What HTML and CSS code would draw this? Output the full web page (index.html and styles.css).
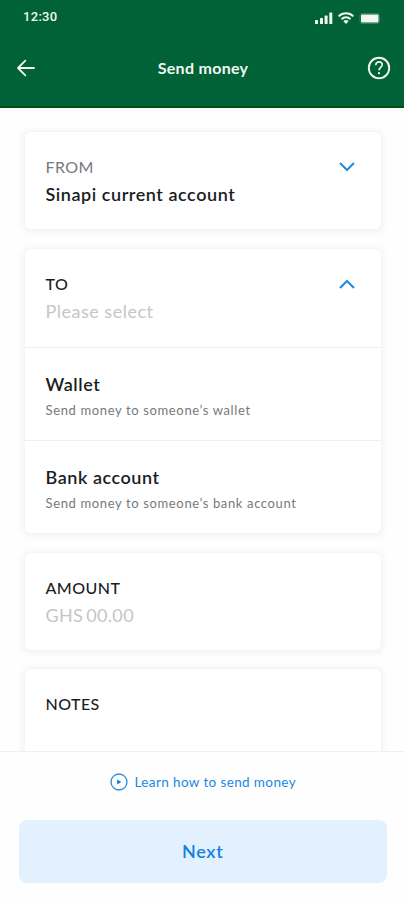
FILE: index.html
```html
<!DOCTYPE html>
<html lang="en">
<head>
<meta charset="utf-8">
<title>Send money</title>
<link rel="stylesheet" href="styles.css">
</head>
<body>
<div class="screen">
  <header class="header">
    <div class="status">
      <span class="time">12:30</span>
      <svg class="status-icons" width="70" height="16" viewBox="0 0 70 16" fill="#f1f8f3">
        <rect x="1" y="11" width="3" height="4" rx=".6"/><rect x="6" y="9" width="3" height="6" rx=".6"/><rect x="10.600" y="6.500" width="3" height="8.500" rx=".6"/><rect x="15.300" y="3.500" width="3" height="11.500" rx=".6"/>
        <g fill="none" stroke="#f1f8f3" stroke-width="2"><path d="M24.700 7.400a10.300 10.300 0 0 1 14.600 0"/><path d="M27.500 10.200a6.400 6.400 0 0 1 9 0"/></g>
        <path d="M29.400 12.300a3.700 3.700 0 0 1 5.200 0L32 15z"/>
        <rect x="46" y="4.500" width="19.500" height="10" rx="2" fill="none" stroke="#397f58"/><rect x="47" y="5.500" width="17.500" height="8" rx=".8"/><path d="M67 8v3q1.300-1.500 0-3z" fill="#397f58"/>
      </svg>
    </div>
    <div class="bar">
      <svg class="back" width="20" height="20" viewBox="0 0 20 20" fill="none" stroke="#f1f8f3" stroke-width="1.800" stroke-linecap="round" stroke-linejoin="round"><path d="M18 10H2M9.300 2.700 2 10l7.300 7.300"/></svg>
      <h1 class="title">Send money</h1>
      <svg class="help" width="24" height="24" viewBox="0 0 24 24" fill="none" stroke="#f1f8f3" stroke-width="1.900"><circle cx="12" cy="12" r="10.200"/><path d="M8.800 9.200c0-4.500 6.800-4.200 6.400-.2-.3 2.200-3.200 2.600-3.200 5.300" stroke-width="1.700"/><circle cx="12" cy="17.200" r="1.100" fill="#f1f8f3" stroke="none"/></svg>
    </div>
  </header>

  <main class="content">
    <section class="card field">
      <div class="row"><span class="label muted">FROM</span>
        <svg class="chevron" width="18" height="12" viewBox="0 0 18 12"><path d="m2 2 7 7 7-7"/></svg></div>
      <div class="value">Sinapi current account</div>
    </section>
    <section class="card">
      <div class="field select">
        <div class="row"><span class="label">TO</span>
          <svg class="chevron" width="18" height="12" viewBox="0 0 18 12"><path d="m2 10 7-7 7 7"/></svg></div>
        <div class="placeholder">Please select</div>
      </div>
      <div class="option">
        <div class="value">Wallet</div>
        <div class="hint">Send money to someone’s wallet</div>
      </div>
      <div class="option">
        <div class="value">Bank account</div>
        <div class="hint">Send money to someone’s bank account</div>
      </div>
    </section>
    <section class="card field">
      <div class="row"><span class="label">AMOUNT</span></div>
      <div class="placeholder currency">GHS 00.00</div>
    </section>
    <section class="card field">
      <div class="row"><span class="label">NOTES</span></div>
    </section>
  </main>

  <footer class="footer">
    <a class="learn">
      <svg width="18" height="18" viewBox="0 0 18 18"><circle cx="9" cy="9" r="8" fill="none" stroke="#2a8ce0" stroke-width="1.300"/><path d="M7.200 6.600v4.800L11.300 9z" fill="#0b78d8"/></svg>
      <span class="learn-text">Learn how to send money</span>
    </a>
    <button class="next">Next</button>
  </footer>
</div>
</body>
</html>
```
FILE: styles.css
```css
* { box-sizing: border-box; }
body { margin: 0; background: #fefefe; font-family: Lato, "Liberation Sans", sans-serif; color: #1b1d1f; }
.screen { height: 900px; display: flex; flex-direction: column; overflow: hidden; }
.header { flex: none; height: 108px; background: #006236; border-bottom: 2px solid #005012; color: #f1f8f3; }
.status { height: 34px; padding: 0 20px 0 23px; display: flex; justify-content: space-between; align-items: center; }
.time { font: 500 13px/34px Roboto, sans-serif; letter-spacing: .3px; }
.status-icons { margin-bottom: 1px; }
.bar { height: 68px; display: flex; align-items: center; justify-content: space-between; padding: 0 13px 0 16px; }
.title { margin: 0; padding-left: 3px; font-size: 16px; line-height: 20px; font-weight: 700; letter-spacing: .3px; }
.content { flex: 1; min-height: 0; overflow: hidden; padding: 24px 23px 0 25px; display: flex; flex-direction: column; gap: 19.5px; }
.card { flex: none; background: #fff; border-radius: 6px; box-shadow: 0 0 0 1px #f5f5f5, 0 1px 7px 2px rgba(0,0,0,.055); }
.field { height: 97px; padding: 25px 25.5px 0 20.5px; }
.select { height: 98.5px; }
.row { height: 20px; display: flex; justify-content: space-between; align-items: center; }
.label { font-size: 16px; line-height: 20px; letter-spacing: .45px; font-weight: 500; }
.muted { color: #77797b; font-weight: 400; }
.chevron { fill: none; stroke: #2088e5; stroke-width: 2; }
.value { margin-top: 4px; font-size: 18px; line-height: 26px; font-weight: 600; letter-spacing: .55px; }
.placeholder { margin-top: 5px; font-size: 18px; line-height: 24px; letter-spacing: .5px; color: #c4c6c8; }
.currency { letter-spacing: .35px; word-spacing: -2px; }
.option { height: 93px; border-top: 1px solid #eeeff0; padding: 23px 20.5px 0; }
.option .value { margin: 0; }
.hint { font-size: 13px; line-height: 18px; margin-top: 4px; letter-spacing: .64px; color: #77797b; }
.footer { flex: none; height: 149px; border-top: 1px solid #f0f0f0; background: #fefefe; padding: 20px 17px 0 18.5px; }
.learn { height: 20px; display: flex; justify-content: center; align-items: center; gap: 7px; color: #2088e5; font-size: 13.5px; letter-spacing: .38px; }
.next { display: block; width: 100%; height: 63px; margin-top: 28px; padding: 0 0 2px; border: 0; border-radius: 8px; background: #e3f1fe; color: #1480e1; font: 600 18px/24px Lato, sans-serif; letter-spacing: .65px; }
```
